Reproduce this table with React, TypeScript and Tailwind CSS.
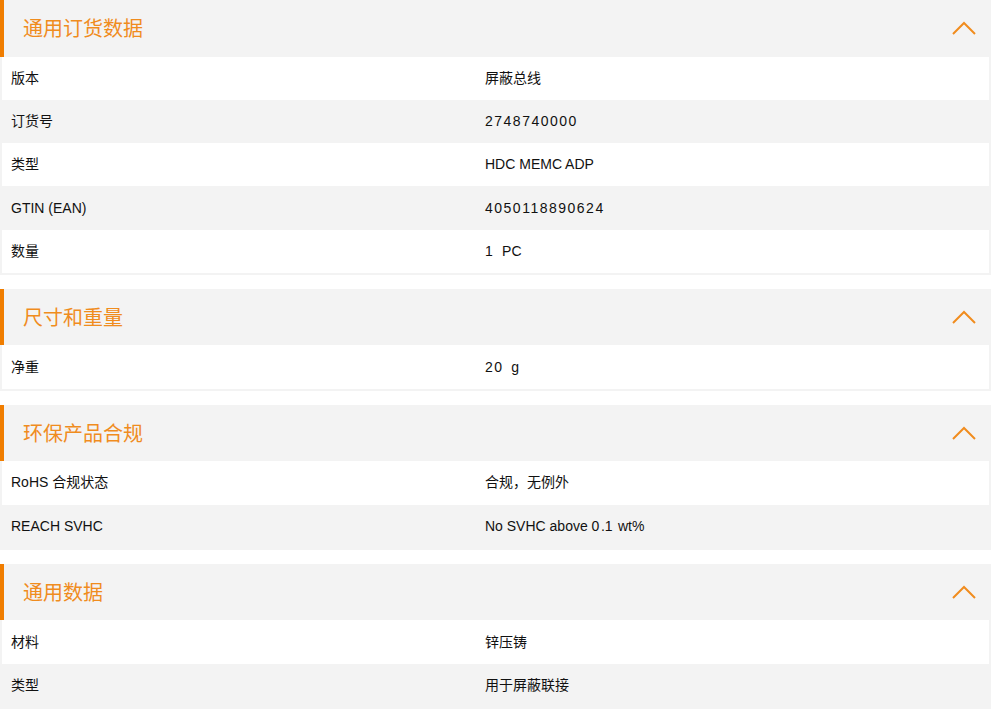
import React from "react";

type Row = { label: string; value: string };

const sections: { title: string; rows: Row[] }[] = [
  {
    title: "通用订货数据",
    rows: [
      { label: "版本", value: "屏蔽总线" },
      { label: "订货号", value: "2748740000" },
      { label: "类型", value: "HDC MEMC ADP" },
      { label: "GTIN (EAN)", value: "4050118890624" },
      { label: "数量", value: "1  PC" },
    ],
  },
  {
    title: "尺寸和重量",
    rows: [{ label: "净重", value: "20  g" }],
  },
  {
    title: "环保产品合规",
    rows: [
      { label: "RoHS 合规状态", value: "合规，无例外" },
      { label: "REACH SVHC", value: "No SVHC above 0.1 wt%" },
    ],
  },
  {
    title: "通用数据",
    rows: [
      { label: "材料", value: "锌压铸" },
      { label: "类型", value: "用于屏蔽联接" },
    ],
  },
];

// digits in the source font are wider than Arial's, so spread them a bit
const withDigits = (text: string) =>
  text.split(/(\d+)/).map((part, i) =>
    /^\d+$/.test(part) ? (
      <span key={i} className="tracking-[1.5px]">
        {part}
      </span>
    ) : (
      <React.Fragment key={i}>{part}</React.Fragment>
    )
  );

const ChevronUp = () => (
  <svg width="24" height="14" viewBox="0 0 24 14" fill="none">
    <path d="M1 13 L12 2 L23 13" stroke="#f08c1e" strokeWidth="2" />
  </svg>
);

const Section = ({ title, rows }: { title: string; rows: Row[] }) => (
  <div className="mb-[14px]">
    <div className="h-[56.5px] flex items-center justify-between bg-[#f3f3f3] border-l-4 border-[#f07d00] pl-[19px] pr-[15px]">
      <span className="text-[20px] text-[#f08c1e] pt-px">{title}</span>
      <ChevronUp />
    </div>
    <div className="bg-[#f3f3f3] px-[2px] pb-[2px]">
      {rows.map((r, i) => (
        <div
          key={r.label + i}
          className={`h-[43.3px] flex items-center text-[14px] text-[#111] ${
            i % 2 === 0 ? "bg-white" : "bg-[#f3f3f3]"
          }`}
        >
          <div className="w-[474px] pl-[9px]">{r.label}</div>
          <div className="pl-[9px] whitespace-pre">{withDigits(r.value)}</div>
        </div>
      ))}
    </div>
  </div>
);

export default function App() {
  return (
    <div
      className="w-[991px] bg-white"
      style={{ fontFamily: '"Liberation Sans", Arial, "Noto Sans CJK SC", sans-serif' }}
    >
      {sections.map((s) => (
        <Section key={s.title} title={s.title} rows={s.rows} />
      ))}
    </div>
  );
}
